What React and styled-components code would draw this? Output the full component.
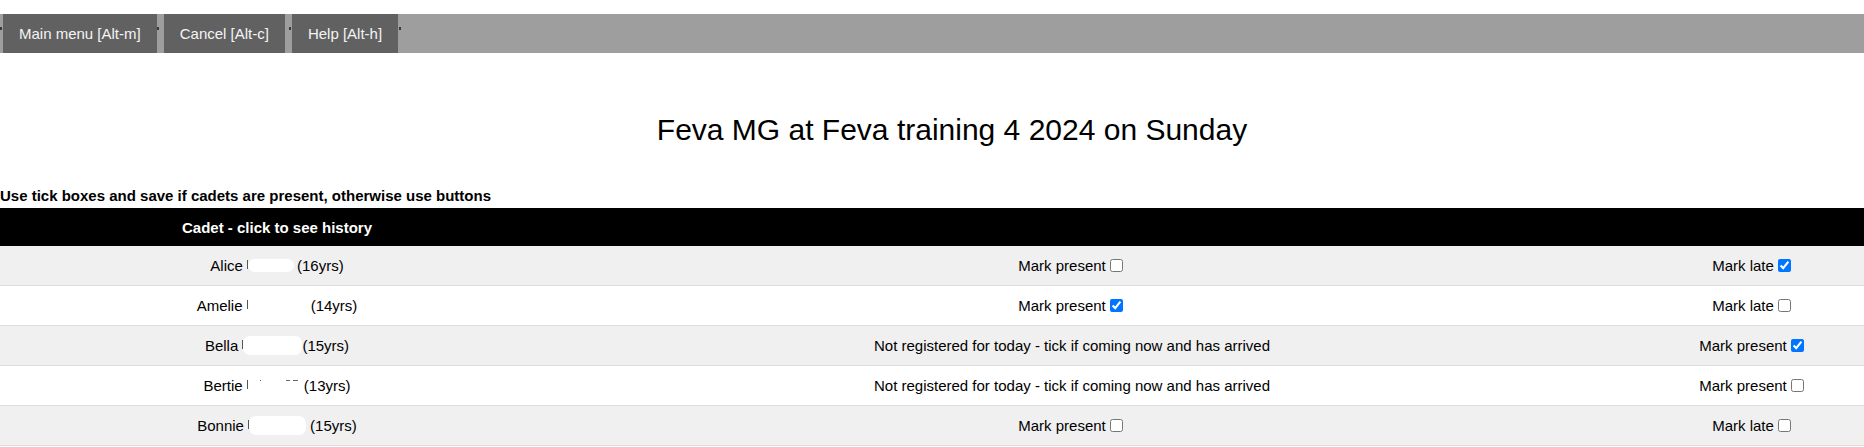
import React from 'react';
import styled, { createGlobalStyle } from 'styled-components';

const cadets = [
  { first: 'Alice', age: 16, blot: 46, blotH: 13, gap: 3, mid: { text: 'Mark present', checked: false }, right: { text: 'Mark late', checked: true } },
  { first: 'Amelie', age: 14, blot: 60, blotH: 13, gap: 3, mid: { text: 'Mark present', checked: true }, right: { text: 'Mark late', checked: false } },
  { first: 'Bella', age: 15, blot: 59, blotH: 19, gap: 0, mid: { text: 'Not registered for today - tick if coming now and has arrived' }, right: { text: 'Mark present', checked: true } },
  { first: 'Bertie', age: 13, blot: 52, blotH: 13, gap: 4, marks: true, mid: { text: 'Not registered for today - tick if coming now and has arrived' }, right: { text: 'Mark present', checked: false } },
  { first: 'Bonnie', age: 15, blot: 57, blotH: 19, gap: 4, mid: { text: 'Mark present', checked: false }, right: { text: 'Mark late', checked: false } },
];

const App = () => {
  return (
    <>
      <GlobalStyle />
      <Page>
        <Toolbar>
          <Tick />
          <MenuButton $ml={1}>Main menu [Alt-m]</MenuButton>
          <Tick />
          <MenuButton $ml={5}>Cancel [Alt-c]</MenuButton>
          <Tick $ml={4} />
          <MenuButton $ml={1}>Help [Alt-h]</MenuButton>
          <Tick $ml={1} />
        </Toolbar>

        <Title>Feva MG at Feva training 4 2024 on Sunday</Title>
        <Hint>Use tick boxes and save if cadets are present, otherwise use buttons</Hint>

        <Table>
          <HeadRow>
            <HeadCell>Cadet - click to see history</HeadCell>
            <HeadCell />
            <HeadCell />
            <HeadCell />
          </HeadRow>
          {cadets.map((c, i) => (
            <Row key={c.first} $striped={i % 2 === 0}>
              <Cell>
                <NameLink>
                  {c.first}&nbsp;
                  <Stub />
                  <Blot $w={c.blot} $h={c.blotH}>
                    {c.marks && (
                      <>
                        <Mark $x={12} $w={1} />
                        <Mark $x={38} $w={4} />
                        <Mark $x={45} $w={5} />
                      </>
                    )}
                  </Blot>
                  <Spacer $w={c.gap} />({c.age}yrs)
                </NameLink>
              </Cell>
              <Cell>
                {c.mid.text}
                {'checked' in c.mid && <Box type="checkbox" defaultChecked={c.mid.checked} />}
              </Cell>
              <Cell />
              <Cell>
                {c.right.text}
                <Box type="checkbox" defaultChecked={c.right.checked} />
              </Cell>
            </Row>
          ))}
        </Table>
      </Page>
    </>
  );
};

export default App;

const GlobalStyle = createGlobalStyle`
  body {
    margin: 0;
    background: #fff;
    font-family: 'Liberation Sans', Arial, sans-serif;
    color: #000;
  }
`;

const Page = styled.div`
  padding-top: 14px;
`;

const Toolbar = styled.div`
  display: flex;
  align-items: stretch;
  height: 39px;
  background: #9e9e9e;
`;

const Tick = styled.span`
  width: 2px;
  height: 3px;
  margin-top: 13px;
  margin-left: ${({ $ml }) => $ml || 0}px;
  background: #3a3a3a;
`;

const MenuButton = styled.button`
  display: flex;
  align-items: center;
  margin-left: ${({ $ml }) => $ml || 0}px;
  padding: 0 16px;
  border: none;
  background: #616161;
  color: #f4f4f4;
  font-family: 'Liberation Sans', Arial, sans-serif;
  font-size: 15px;
  cursor: pointer;
`;

const Title = styled.h1`
  margin: 60px 0 0;
  padding-left: 40px;
  text-align: center;
  font-size: 30px;
  line-height: 34px;
  font-weight: normal;
`;

const Hint = styled.p`
  margin: 40px 0 4px;
  font-size: 15px;
  line-height: 17px;
  font-weight: bold;
`;

const Table = styled.div`
  display: flex;
  flex-direction: column;
`;

const columns = '554px 1036px 52px 222px';

const HeadRow = styled.div`
  display: grid;
  grid-template-columns: ${columns};
  height: 38px;
  background: #000;
`;

const HeadCell = styled.div`
  display: flex;
  align-items: center;
  justify-content: center;
  color: #fff;
  font-size: 15px;
  font-weight: bold;
`;

const Row = styled.div`
  display: grid;
  grid-template-columns: ${columns};
  height: 39px;
  background: ${({ $striped }) => ($striped ? '#f0f0f0' : '#fff')};
  border-bottom: 1px solid #dcdcdc;
`;

const Cell = styled.div`
  display: flex;
  align-items: center;
  justify-content: center;
  font-size: 15px;
  white-space: nowrap;
`;

const NameLink = styled.span`
  display: inline-flex;
  align-items: center;
  cursor: pointer;
`;

const Stub = styled.span`
  width: 1px;
  height: 9px;
  margin-top: -2px;
  background: #555;
`;

const Blot = styled.span`
  position: relative;
  display: inline-block;
  width: ${({ $w }) => $w}px;
  height: ${({ $h }) => $h}px;
  border-radius: 7px;
  background: #fff;
`;

const Mark = styled.span`
  position: absolute;
  top: 1px;
  left: ${({ $x }) => $x}px;
  width: ${({ $w }) => $w}px;
  height: 1px;
  background: #666;
`;

const Spacer = styled.span`
  display: inline-block;
  width: ${({ $w }) => $w}px;
`;

const Box = styled.input`
  margin: 3px 3px 3px 4px;
  width: 13px;
  height: 13px;
`;
